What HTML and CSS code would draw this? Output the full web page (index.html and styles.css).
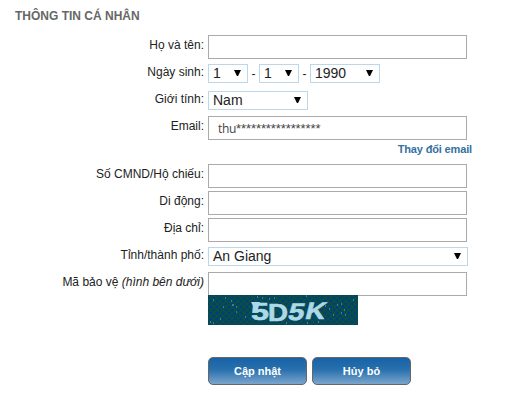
FILE: index.html
```html
<!DOCTYPE html>
<html lang="vi">
<head>
<meta charset="utf-8">
<title>Thông tin cá nhân</title>
<link rel="stylesheet" href="styles.css">
</head>
<body>
<h1 class="title">THÔNG TIN CÁ NHÂN</h1>
<form class="form">
  <div class="row"><label class="label">Họ và tên:</label><div class="input"></div></div>
  <div class="row"><label class="label">Ngày sinh:</label>
    <div class="date">
      <div class="select day">1<i class="arrow"></i></div><span class="dash">-</span>
      <div class="select day">1<i class="arrow"></i></div><span class="dash">-</span>
      <div class="select year">1990<i class="arrow"></i></div>
    </div>
  </div>
  <div class="row"><label class="label">Giới tính:</label><div class="select gender">Nam<i class="arrow"></i></div></div>
  <div class="row"><label class="label">Email:</label><div class="input email">thu<span class="stars">*****************</span></div></div>
  <div class="change"><a class="link">Thay đổi email</a></div>
  <div class="row"><label class="label">Số CMND/Hộ chiếu:</label><div class="input"></div></div>
  <div class="row"><label class="label">Di động:</label><div class="input"></div></div>
  <div class="row"><label class="label">Địa chỉ:</label><div class="input"></div></div>
  <div class="row"><label class="label">Tỉnh/thành phố:</label><div class="select city">An Giang<i class="arrow"></i></div></div>
  <div class="row last"><label class="label">Mã bảo vệ <em>(hình bên dưới)</em></label><div class="input"></div></div>
  <svg class="captcha" width="150" height="30" viewBox="0 0 150 30">
    <defs>
      <pattern id="weave" width="6" height="6" patternUnits="userSpaceOnUse">
        <rect width="6" height="6" fill="#053a86"/>
        <path d="M-1 -1L7 7M7 -1L-1 7" stroke="#09552f" stroke-width="1.3"/>
      </pattern>
    </defs>
    <rect width="150" height="30" fill="url(#weave)"/>
    <g class="glyphs">
      <text x="43" y="25" textLength="18" lengthAdjust="spacingAndGlyphs">5</text>
      <text x="60" y="25.5" textLength="20" lengthAdjust="spacingAndGlyphs">D</text>
      <text x="79" y="25" textLength="16" lengthAdjust="spacingAndGlyphs" transform="translate(5.3 0) skewX(-12)">5</text>
      <text x="97" y="24.5" textLength="20" lengthAdjust="spacingAndGlyphs" transform="translate(5.1 0) skewX(-14)">K</text>
    </g>
    <path class="wedge" d="M43 7L52 7L50 14L47 14Z"/>
    <path class="specks" d="M17 3h1M23 6h1M15 12h1M24 10h2M28 12h1M5 5h1M2 27h1M5 28h1M12 24h1M28 17h1M49 2h1M54 3h1M61 4h1M98 1h1M117 11h1M121 14h1M125 20h1M129 10h1M133 9h1M136 15h1M145 5h1M133 18h1M110 27h1M99 28h1M78 28h1M37 22h1M66 3h1M137 20h1"/>
  </svg>
  <div class="actions">
    <button class="button" type="button">Cập nhật</button>
    <button class="button" type="button">Hủy bỏ</button>
  </div>
</form>
</body>
</html>
```
FILE: styles.css
```css
* { box-sizing: border-box; }
body {
  margin: 0;
  background: #fff;
  color: #222;
  font: 12px/14px "Liberation Sans", Arial, sans-serif;
}
.title {
  margin: 0;
  padding: 9px 0 0 15px;
  height: 35px;
  font-size: 12px;
  line-height: 14px;
  color: #666;
}
.form { margin: 0; }
.row {
  display: grid;
  grid-template-columns: 204px 260px;
  column-gap: 4px;
  height: 27px;
}
.row.last { height: 23px; }
.label { padding-top: 3px; text-align: right; white-space: nowrap; }
.input {
  width: 259px;
  height: 24px;
  border: 1px solid #aaa;
  background: #fff;
}
.email {
  padding: 5px 0 0 9px;
  color: #444;
  font: 12px/14px "Open Sans", sans-serif;
  letter-spacing: -0.3px;
}
.stars {
  font: 13px/14px "Liberation Sans", Arial, sans-serif;
  letter-spacing: -0.1px;
}
.date { display: flex; }
.dash { width: 11px; padding-top: 5px; text-align: center; }
.select {
  display: flex;
  justify-content: space-between;
  align-items: center;
  height: 19px;
  margin-top: 2px;
  padding: 0 5px 0 4px;
  border: 1px solid #bcd6ea;
  font-size: 14px;
  line-height: 17px;
}
.arrow {
  width: 7px;
  height: 6px;
  margin: 0 1px 1px 0;
  background: #000;
  clip-path: polygon(0 0, 100% 0, 58% 100%, 42% 100%);
}
.day { width: 40px; }
.year { width: 70px; }
.gender { width: 100px; }
.city { width: 260px; }
.change { height: 21px; padding-right: 49px; text-align: right; }
.link { position: relative; top: -1px; color: #36719f; font-size: 11px; font-weight: bold; letter-spacing: -0.15px; }
.captcha { display: block; position: relative; margin-left: 208px; }
.glyphs {
  fill: #add9e7;
  stroke: #add9e7;
  stroke-width: 0.6;
  font: bold 24px "Liberation Sans", Arial, sans-serif;
}
.wedge { fill: #add9e7; }
.specks { stroke: #75b9c4; stroke-width: 1.2; }
.actions { display: flex; gap: 5px; padding: 32px 0 0 208px; }
.button {
  width: 99px;
  height: 28px;
  padding: 0;
  border: 1px solid #666;
  border-radius: 5px;
  background: linear-gradient(#1763a6, #2870ae 45%, #7ba5cc);
  color: #fff;
  font: bold 11px "Liberation Sans", Arial, sans-serif;
}
```
